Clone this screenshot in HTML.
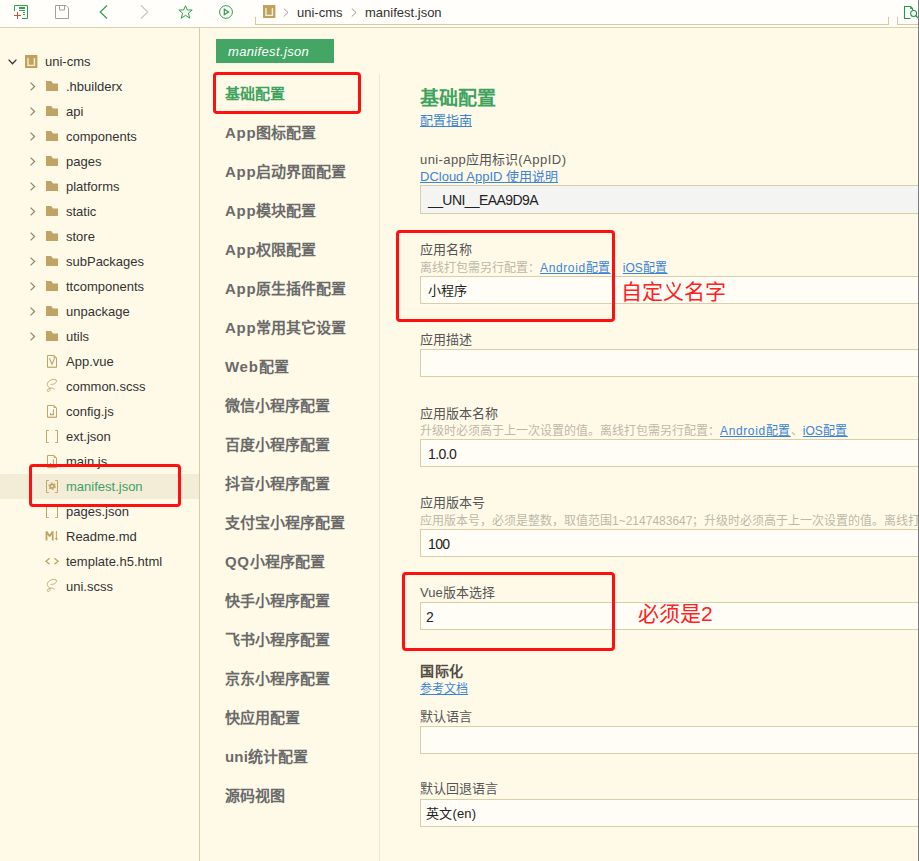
<!DOCTYPE html>
<html lang="zh-CN"><head><meta charset="utf-8"><style>
*{margin:0;padding:0;box-sizing:border-box}
html,body{width:919px;height:861px;overflow:hidden}
body{position:relative;background:#FFFAE8;font-family:"Liberation Sans",sans-serif;font-size:13px;color:#333}
.a{position:absolute;white-space:nowrap}
svg{position:absolute;overflow:visible}
#tb{position:absolute;left:0;top:0;width:919px;height:27px;background:#FFFEFA}
.ln{position:absolute}
.row{position:absolute;left:0;width:199px;height:25px}
.row .t{position:absolute;left:66px;top:4px;line-height:16px;font-size:13px;color:#333;white-space:nowrap}
.nav{position:absolute;left:225px;font-size:15px;font-weight:bold;color:#6A6A6A;line-height:18px;white-space:nowrap}
.lbl{position:absolute;left:420px;font-size:13px;color:#555;line-height:16px;white-space:nowrap}
.hint{position:absolute;left:420px;font-size:12px;color:#BDB7A8;line-height:14px;white-space:nowrap}
.lnk{color:#3A84D8;text-decoration:underline}
.inp{position:absolute;left:420px;width:498px;height:28px;border:1px solid #D9CFA6;border-right:none;background:#FFFDF6}
.inp span{position:absolute;left:7px;top:6px;line-height:16px;font-size:14px;letter-spacing:-0.6px;color:#222;white-space:nowrap}
.red{position:absolute;border:3px solid #FF1010;border-radius:4px}
.ann{position:absolute;color:#FF2020;font-size:21px;line-height:24px;white-space:nowrap}
</style></head><body>
<div id="tb"></div>
<div class="ln" style="left:0;top:27px;width:919px;height:1px;background:#DCCFA6"></div>
<svg style="left:14px;top:5px" width="14" height="14" viewBox="0 0 14 14"><path d="M0.5 6V0.5H13.5V13.5H8" fill="none" stroke="#2E9E4F" stroke-width="1"/><rect x="5" y="2" width="6" height="2" fill="#2E9E4F"/><rect x="5" y="5" width="6" height="1" fill="#2E9E4F"/><rect x="9" y="7" width="2" height="1" fill="#2E9E4F"/><rect x="9" y="9" width="2" height="1" fill="#2E9E4F"/><path d="M0 10.5H7M3.5 7V14" stroke="#D9472B" stroke-width="1"/></svg>
<svg style="left:55px;top:5px" width="14" height="14" viewBox="0 0 14 14"><path d="M0.5 0.5H11L13.5 3V13.5H0.5Z" fill="none" stroke="#A0A0A0" stroke-width="1"/><path d="M4.5 0.5V5H9.5V0.5" fill="none" stroke="#A0A0A0" stroke-width="1"/></svg>
<svg style="left:99px;top:5px" width="9" height="14" viewBox="0 0 9 14"><path d="M8 0.5L1.2 7L8 13.5" fill="none" stroke="#2E9E4F" stroke-width="1.2"/></svg>
<svg style="left:140px;top:5px" width="9" height="14" viewBox="0 0 9 14"><path d="M1 0.5L7.8 7L1 13.5" fill="none" stroke="#C8C8C8" stroke-width="1.2"/></svg>
<svg style="left:177.5px;top:5px" width="15" height="14" viewBox="0 0 15 14"><path d="M7.5 0.8L9.4 5H14.2L10.4 8.1L11.8 13.2L7.5 10.3L3.2 13.2L4.6 8.1L0.8 5H5.6Z" fill="none" stroke="#2E9E4F" stroke-width="1"/></svg>
<svg style="left:219px;top:5px" width="14" height="14" viewBox="0 0 14 14"><circle cx="7" cy="7" r="6.4" fill="none" stroke="#2E9E4F" stroke-width="1"/><path d="M5.3 4.2V9.6L9.6 6.9Z" fill="none" stroke="#2E9E4F" stroke-width="1.2"/></svg>
<div class="ln" style="left:255px;top:17px;width:1px;height:8px;background:#D8C9A0"></div>
<div class="ln" style="left:255px;top:24px;width:634px;height:1px;background:#D8C9A0"></div>
<div class="ln" style="left:888px;top:17px;width:1px;height:8px;background:#D8C9A0"></div>
<div class="ln" style="left:897px;top:17px;width:1px;height:8px;background:#D8C9A0"></div>
<div class="ln" style="left:897px;top:24px;width:22px;height:1px;background:#D8C9A0"></div>
<svg style="left:263px;top:5px" width="12" height="13" viewBox="0 0 12 13"><rect x="0" y="0" width="12.4" height="13" fill="#BFA25E"/><path d="M3 3V10.4H9.4V3" fill="none" stroke="#F7EDD2" stroke-width="1.4"/></svg>
<svg style="left:283px;top:8px" width="6" height="9" viewBox="0 0 6 9"><path d="M0.8 0.5L5 4.5L0.8 8.5" fill="none" stroke="#999" stroke-width="1"/></svg>
<div class="a" style="left:297px;top:5px;line-height:16px;color:#333">uni-cms</div>
<svg style="left:351px;top:8px" width="6" height="9" viewBox="0 0 6 9"><path d="M0.8 0.5L5 4.5L0.8 8.5" fill="none" stroke="#999" stroke-width="1"/></svg>
<div class="a" style="left:365px;top:5px;line-height:16px;color:#333">manifest.json</div>
<svg style="left:904px;top:6px" width="15" height="13" viewBox="0 0 15 13"><path d="M6.5 12.5H0.5V0.5H6.6L8.6 2.5V4.5" fill="none" stroke="#1E9A48" stroke-width="1.1"/><path d="M6.3 0.2L9 2.9H6.3Z" fill="#1E9A48"/><circle cx="9.6" cy="7.5" r="3" fill="none" stroke="#1E9A48" stroke-width="1.1"/><path d="M11.7 9.6L14 12" stroke="#1E9A48" stroke-width="1.2"/></svg>
<svg style="left:8px;top:59px" width="9" height="6" viewBox="0 0 9 6"><path d="M0.6 0.6L4.5 4.8L8.4 0.6" fill="none" stroke="#333" stroke-width="1.3"/></svg>
<svg style="left:25px;top:55px" width="12" height="13" viewBox="0 0 12 13"><rect x="0" y="0" width="12.4" height="13" fill="#BFA25E"/><path d="M3 3V10.4H9.4V3" fill="none" stroke="#F7EDD2" stroke-width="1.4"/></svg>
<div class="a" style="left:45px;top:54px;line-height:16px;color:#333">uni-cms</div>
<svg style="left:30px;top:82px" width="6" height="9" viewBox="0 0 6 9"><path d="M0.6 0.6L4.6 4.5L0.6 8.4" fill="none" stroke="#8C8468" stroke-width="1.2"/></svg>
<svg style="left:46px;top:81px" width="12" height="10" viewBox="0 0 12 10"><path d="M0 0H5.2L7 2.6H12V10H0Z" fill="#BFA465"/></svg>
<div class="a" style="left:66px;top:79px;line-height:16px;color:#333">.hbuilderx</div>
<svg style="left:30px;top:107px" width="6" height="9" viewBox="0 0 6 9"><path d="M0.6 0.6L4.6 4.5L0.6 8.4" fill="none" stroke="#8C8468" stroke-width="1.2"/></svg>
<svg style="left:46px;top:106px" width="12" height="10" viewBox="0 0 12 10"><path d="M0 0H5.2L7 2.6H12V10H0Z" fill="#BFA465"/></svg>
<div class="a" style="left:66px;top:104px;line-height:16px;color:#333">api</div>
<svg style="left:30px;top:132px" width="6" height="9" viewBox="0 0 6 9"><path d="M0.6 0.6L4.6 4.5L0.6 8.4" fill="none" stroke="#8C8468" stroke-width="1.2"/></svg>
<svg style="left:46px;top:131px" width="12" height="10" viewBox="0 0 12 10"><path d="M0 0H5.2L7 2.6H12V10H0Z" fill="#BFA465"/></svg>
<div class="a" style="left:66px;top:129px;line-height:16px;color:#333">components</div>
<svg style="left:30px;top:157px" width="6" height="9" viewBox="0 0 6 9"><path d="M0.6 0.6L4.6 4.5L0.6 8.4" fill="none" stroke="#8C8468" stroke-width="1.2"/></svg>
<svg style="left:46px;top:156px" width="12" height="10" viewBox="0 0 12 10"><path d="M0 0H5.2L7 2.6H12V10H0Z" fill="#BFA465"/></svg>
<div class="a" style="left:66px;top:154px;line-height:16px;color:#333">pages</div>
<svg style="left:30px;top:182px" width="6" height="9" viewBox="0 0 6 9"><path d="M0.6 0.6L4.6 4.5L0.6 8.4" fill="none" stroke="#8C8468" stroke-width="1.2"/></svg>
<svg style="left:46px;top:181px" width="12" height="10" viewBox="0 0 12 10"><path d="M0 0H5.2L7 2.6H12V10H0Z" fill="#BFA465"/></svg>
<div class="a" style="left:66px;top:179px;line-height:16px;color:#333">platforms</div>
<svg style="left:30px;top:207px" width="6" height="9" viewBox="0 0 6 9"><path d="M0.6 0.6L4.6 4.5L0.6 8.4" fill="none" stroke="#8C8468" stroke-width="1.2"/></svg>
<svg style="left:46px;top:206px" width="12" height="10" viewBox="0 0 12 10"><path d="M0 0H5.2L7 2.6H12V10H0Z" fill="#BFA465"/></svg>
<div class="a" style="left:66px;top:204px;line-height:16px;color:#333">static</div>
<svg style="left:30px;top:232px" width="6" height="9" viewBox="0 0 6 9"><path d="M0.6 0.6L4.6 4.5L0.6 8.4" fill="none" stroke="#8C8468" stroke-width="1.2"/></svg>
<svg style="left:46px;top:231px" width="12" height="10" viewBox="0 0 12 10"><path d="M0 0H5.2L7 2.6H12V10H0Z" fill="#BFA465"/></svg>
<div class="a" style="left:66px;top:229px;line-height:16px;color:#333">store</div>
<svg style="left:30px;top:257px" width="6" height="9" viewBox="0 0 6 9"><path d="M0.6 0.6L4.6 4.5L0.6 8.4" fill="none" stroke="#8C8468" stroke-width="1.2"/></svg>
<svg style="left:46px;top:256px" width="12" height="10" viewBox="0 0 12 10"><path d="M0 0H5.2L7 2.6H12V10H0Z" fill="#BFA465"/></svg>
<div class="a" style="left:66px;top:254px;line-height:16px;color:#333">subPackages</div>
<svg style="left:30px;top:282px" width="6" height="9" viewBox="0 0 6 9"><path d="M0.6 0.6L4.6 4.5L0.6 8.4" fill="none" stroke="#8C8468" stroke-width="1.2"/></svg>
<svg style="left:46px;top:281px" width="12" height="10" viewBox="0 0 12 10"><path d="M0 0H5.2L7 2.6H12V10H0Z" fill="#BFA465"/></svg>
<div class="a" style="left:66px;top:279px;line-height:16px;color:#333">ttcomponents</div>
<svg style="left:30px;top:307px" width="6" height="9" viewBox="0 0 6 9"><path d="M0.6 0.6L4.6 4.5L0.6 8.4" fill="none" stroke="#8C8468" stroke-width="1.2"/></svg>
<svg style="left:46px;top:306px" width="12" height="10" viewBox="0 0 12 10"><path d="M0 0H5.2L7 2.6H12V10H0Z" fill="#BFA465"/></svg>
<div class="a" style="left:66px;top:304px;line-height:16px;color:#333">unpackage</div>
<svg style="left:30px;top:332px" width="6" height="9" viewBox="0 0 6 9"><path d="M0.6 0.6L4.6 4.5L0.6 8.4" fill="none" stroke="#8C8468" stroke-width="1.2"/></svg>
<svg style="left:46px;top:331px" width="12" height="10" viewBox="0 0 12 10"><path d="M0 0H5.2L7 2.6H12V10H0Z" fill="#BFA465"/></svg>
<div class="a" style="left:66px;top:329px;line-height:16px;color:#333">utils</div>
<svg style="left:47px;top:355px" width="10" height="13" viewBox="0 0 10 13"><path d="M0.5 0.5H6.9L9.5 2.8V12.3H0.5Z" fill="#FFFCEE" stroke="#BFA465" stroke-width="1"/><path d="M6.6 0.5L9.6 3H6.6Z" fill="#BFA465"/><rect x="0.5" y="11.6" width="9" height="1" fill="#BFA465" opacity="0.5"/><path d="M2.4 3.3L5 9.3L7.6 3.3" fill="none" stroke="#BFA465" stroke-width="1.1"/></svg>
<div class="a" style="left:66px;top:354px;line-height:16px;color:#333">App.vue</div>
<svg style="left:44px;top:376px" width="16" height="18" viewBox="0 0 16 18"><path d="M6.5 8.5C9 8.5 12.5 7.5 12.5 5C12.5 3 9.5 3 7.5 3.8C5 4.6 3 6.5 3.2 8.8C3.4 10.5 5.5 11 6 12.5C6.5 14 5.5 15.5 4.2 15.5C3 15.5 3 14 4 13.2C5 12.4 7 11.8 8.5 12.2C9.5 12.5 10 13 10.5 13.5" fill="none" stroke="#BFA465" stroke-width="0.9"/></svg>
<div class="a" style="left:66px;top:379px;line-height:16px;color:#333">common.scss</div>
<svg style="left:47px;top:405px" width="10" height="13" viewBox="0 0 10 13"><path d="M0.5 0.5H6.9L9.5 2.8V12.3H0.5Z" fill="#FFFCEE" stroke="#BFA465" stroke-width="1"/><path d="M6.6 0.5L9.6 3H6.6Z" fill="#BFA465"/><rect x="0.5" y="11.6" width="9" height="1" fill="#BFA465" opacity="0.5"/><path d="M3.5 8V9.6H6.4V4.2" fill="none" stroke="#BFA465" stroke-width="1.1"/></svg>
<div class="a" style="left:66px;top:404px;line-height:16px;color:#333">config.js</div>
<svg style="left:46px;top:430px" width="12" height="13" viewBox="0 0 12 13"><path d="M2.8 0.5H0.5V12.5H2.8M9.2 0.5H11.5V12.5H9.2" fill="none" stroke="#BFA465" stroke-width="1"/></svg>
<div class="a" style="left:66px;top:429px;line-height:16px;color:#333">ext.json</div>
<svg style="left:47px;top:455px" width="10" height="13" viewBox="0 0 10 13"><path d="M0.5 0.5H6.9L9.5 2.8V12.3H0.5Z" fill="#FFFCEE" stroke="#BFA465" stroke-width="1"/><path d="M6.6 0.5L9.6 3H6.6Z" fill="#BFA465"/><rect x="0.5" y="11.6" width="9" height="1" fill="#BFA465" opacity="0.5"/><path d="M3.5 8V9.6H6.4V4.2" fill="none" stroke="#BFA465" stroke-width="1.1"/></svg>
<div class="a" style="left:66px;top:454px;line-height:16px;color:#333">main.js</div>
<div class="ln" style="left:0;top:474px;width:199px;height:25px;background:#F3ECD6"></div>
<svg style="left:46px;top:480px" width="12" height="13" viewBox="0 0 12 13"><path d="M2.8 0.5H0.5V12.5H2.8M9.2 0.5H11.5V12.5H9.2" fill="none" stroke="#BFA465" stroke-width="1"/><circle cx="6.1" cy="6.3" r="1.9" fill="none" stroke="#BFA465" stroke-width="1.7"/><circle cx="6.1" cy="6.3" r="3.1" fill="none" stroke="#BFA465" stroke-width="1.3" stroke-dasharray="1.6 1.65"/></svg>
<div class="a" style="left:66px;top:479px;line-height:16px;color:#3FA068">manifest.json</div>
<svg style="left:46px;top:505px" width="12" height="13" viewBox="0 0 12 13"><path d="M2.8 0.5H0.5V12.5H2.8M9.2 0.5H11.5V12.5H9.2" fill="none" stroke="#BFA465" stroke-width="1"/></svg>
<div class="a" style="left:66px;top:504px;line-height:16px;color:#333">pages.json</div>
<svg style="left:43px;top:527px" width="18" height="18" viewBox="0 0 18 18"><path d="M3.5 13.6V4.6L6.6 9.2L9.7 4.6V13.6" fill="none" stroke="#BFA465" stroke-width="1.8" stroke-linejoin="bevel"/><path d="M13.4 4V12" fill="none" stroke="#BFA465" stroke-width="1.1"/><path d="M11.8 11.1L13.4 13.7L15 11.1Z" fill="#BFA465"/></svg>
<div class="a" style="left:66px;top:529px;line-height:16px;color:#333">Readme.md</div>
<svg style="left:43px;top:552px" width="18" height="18" viewBox="0 0 18 18"><path d="M6.6 6.2L3 9.2L6.6 12.3M11.4 6.2L15.1 9.2L11.4 12.3" fill="none" stroke="#BFA465" stroke-width="1.3"/></svg>
<div class="a" style="left:66px;top:554px;line-height:16px;color:#333">template.h5.html</div>
<svg style="left:44px;top:576px" width="16" height="18" viewBox="0 0 16 18"><path d="M6.5 8.5C9 8.5 12.5 7.5 12.5 5C12.5 3 9.5 3 7.5 3.8C5 4.6 3 6.5 3.2 8.8C3.4 10.5 5.5 11 6 12.5C6.5 14 5.5 15.5 4.2 15.5C3 15.5 3 14 4 13.2C5 12.4 7 11.8 8.5 12.2C9.5 12.5 10 13 10.5 13.5" fill="none" stroke="#BFA465" stroke-width="0.9"/></svg>
<div class="a" style="left:66px;top:579px;line-height:16px;color:#333">uni.scss</div>
<div class="ln" style="left:216px;top:39px;width:118px;height:24px;background:#43A664"></div>
<div class="a" style="left:228px;top:44px;line-height:16px;font-size:13px;letter-spacing:0.35px;font-style:italic;color:#FFFFFF">manifest.json</div>
<div class="nav" style="top:85px;color:#3FA35F">基础配置</div>
<div class="nav" style="top:124px;color:#6A6A6A"><span style="letter-spacing:0.7px">App</span>图标配置</div>
<div class="nav" style="top:163px;color:#6A6A6A"><span style="letter-spacing:0.7px">App</span>启动界面配置</div>
<div class="nav" style="top:202px;color:#6A6A6A"><span style="letter-spacing:0.7px">App</span>模块配置</div>
<div class="nav" style="top:241px;color:#6A6A6A"><span style="letter-spacing:0.7px">App</span>权限配置</div>
<div class="nav" style="top:280px;color:#6A6A6A"><span style="letter-spacing:0.7px">App</span>原生插件配置</div>
<div class="nav" style="top:319px;color:#6A6A6A"><span style="letter-spacing:0.7px">App</span>常用其它设置</div>
<div class="nav" style="top:358px;color:#6A6A6A"><span style="letter-spacing:0.7px">Web</span>配置</div>
<div class="nav" style="top:397px;color:#6A6A6A">微信小程序配置</div>
<div class="nav" style="top:436px;color:#6A6A6A">百度小程序配置</div>
<div class="nav" style="top:475px;color:#6A6A6A">抖音小程序配置</div>
<div class="nav" style="top:514px;color:#6A6A6A">支付宝小程序配置</div>
<div class="nav" style="top:553px;color:#6A6A6A"><span style="letter-spacing:0.7px">QQ</span>小程序配置</div>
<div class="nav" style="top:592px;color:#6A6A6A">快手小程序配置</div>
<div class="nav" style="top:631px;color:#6A6A6A">飞书小程序配置</div>
<div class="nav" style="top:670px;color:#6A6A6A">京东小程序配置</div>
<div class="nav" style="top:709px;color:#6A6A6A">快应用配置</div>
<div class="nav" style="top:748px;color:#6A6A6A"><span style="letter-spacing:0.2px">uni</span>统计配置</div>
<div class="nav" style="top:787px;color:#6A6A6A">源码视图</div>
<div class="a" style="left:420px;top:89px;line-height:20px;font-size:19px;font-weight:bold;color:#3FA35F">基础配置</div>
<div class="a lnk" style="left:420px;top:113px;line-height:16px;font-size:13px">配置指南</div>
<div class="lbl" style="top:152px"><span style="letter-spacing:0.4px">uni-app</span>应用标识<span style="letter-spacing:0.5px">(AppID)</span></div>
<div class="a lnk" style="left:420px;top:169px;line-height:16px;font-size:13px">DCloud AppID 使用说明</div>
<div class="inp" style="top:185px;height:29px;background:#F4F4F2"><span>__UNI__EAA9D9A</span></div>
<div class="lbl" style="top:242px">应用名称</div>
<div class="hint" style="top:261px">离线打包需另行配置：<span class="lnk"><span style="letter-spacing:0.63px">Android</span><span style="letter-spacing:0.5px">配置</span></span>、<span class="lnk">iOS<span style="letter-spacing:0.5px">配置</span></span></div>
<div class="inp" style="top:276px"><span style="font-size:13px;letter-spacing:0;top:6px">小程序</span></div>
<div class="lbl" style="top:332px">应用描述</div>
<div class="inp" style="top:349px"></div>
<div class="lbl" style="top:406px">应用版本名称</div>
<div class="hint" style="top:424px">升级时必须高于上一次设置的值。离线打包需另行配置：<span class="lnk"><span style="letter-spacing:0.63px">Android</span><span style="letter-spacing:0.5px">配置</span></span>、<span class="lnk">iOS<span style="letter-spacing:0.5px">配置</span></span></div>
<div class="inp" style="top:439px"><span>1.0.0</span></div>
<div class="lbl" style="top:495px">应用版本号</div>
<div class="hint" style="top:514px">应用版本号，必须是整数，取值范围1~2147483647；升级时必须高于上一次设置的值。离线打包需另行配置</div>
<div class="inp" style="top:529px"><span>100</span></div>
<div class="lbl" style="top:585px">Vue版本选择</div>
<div class="inp" style="top:602px"><span style="left:5px">2</span></div>
<div class="a" style="left:420px;top:662px;line-height:18px;font-size:14px;letter-spacing:0.6px;font-weight:bold;color:#514C44">国际化</div>
<div class="a lnk" style="left:420px;top:682px;line-height:15px;font-size:12px">参考文档</div>
<div class="lbl" style="top:709px">默认语言</div>
<div class="inp" style="top:726px"></div>
<div class="lbl" style="top:781px">默认回退语言</div>
<div class="inp" style="top:799px"><span style="font-size:13px;letter-spacing:0.2px;top:6px;left:5px">英文(en)</span></div>
<div class="red" style="left:29px;top:464px;width:152px;height:43px"></div>
<div class="red" style="left:213px;top:72px;width:148px;height:42px"></div>
<div class="red" style="left:396px;top:230px;width:219px;height:92px"></div>
<div class="red" style="left:402px;top:572px;width:213px;height:79px"></div>
<div class="ann" style="left:621px;top:280px">自定义名字</div>
<div class="ann" style="left:638px;top:602px">必须是2</div>
<div class="ln" style="left:199px;top:28px;width:1px;height:833px;background:#D9CBA3"></div>
<div class="ln" style="left:379px;top:74px;width:1px;height:787px;background:#EFE6CC"></div>
<div class="ln" style="left:918px;top:0;width:1px;height:861px;background:#7A7A7A"></div>
</body></html>
